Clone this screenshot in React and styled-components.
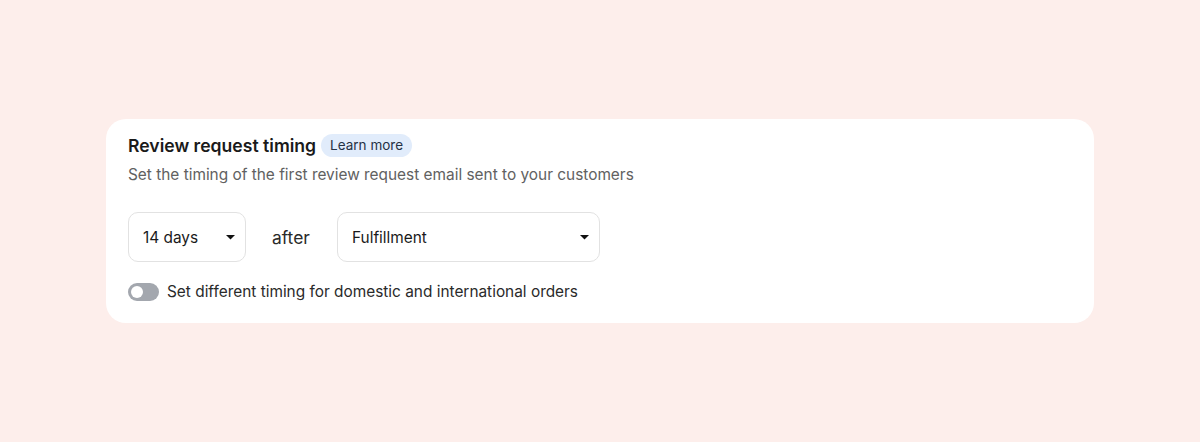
import styled, { createGlobalStyle } from "styled-components";

const GlobalStyle = createGlobalStyle`
  body {
    margin: 0;
    background: #fdeeeb;
    font-family: Inter, "Noto Sans", sans-serif;
    color: #1c1c1c;
  }
`;

const Page = styled.div`
  height: 442px;
  padding: 119px 106px 0;
  box-sizing: border-box;
`;

const Card = styled.section`
  background: #fff;
  border-radius: 20px;
  padding: 13px 22px 22px;
  height: 204px;
  box-sizing: border-box;
`;

const TitleRow = styled.div`
  display: flex;
  align-items: center;
  gap: 5px;
  height: 26px;
`;

const Title = styled.h2`
  margin: 0;
  font-size: 17.6px;
  font-weight: 600;
  color: #1a1a1a;
`;

const Badge = styled.a`
  display: inline-flex;
  align-items: center;
  height: 23px;
  padding: 0 9px;
  border-radius: 12px;
  background: #e1ecfb;
  color: #253246;
  font-size: 13.5px;
  text-decoration: none;
`;

const Subtitle = styled.p`
  margin: 8px 0 0;
  font-size: 15.4px;
  color: #616161;
  line-height: 18px;
`;

const Controls = styled.div`
  display: flex;
  align-items: center;
  margin-top: 28px;
`;

const Select = styled.button`
  display: flex;
  align-items: center;
  justify-content: space-between;
  width: ${(p) => p.$width}px;
  height: 50px;
  padding: 0 10px 0 14px;
  box-sizing: border-box;
  background: #fff;
  border: 1px solid #e2e2e2;
  border-radius: 10px;
  font-family: inherit;
  font-size: 15.4px;
  color: #1a1a1a;
`;

const After = styled.span`
  font-size: 17.4px;
  color: #2a2a2a;
  margin: 0 26px 0 26px;
  width: 39px;
`;

const ToggleRow = styled.label`
  display: flex;
  align-items: center;
  gap: 8px;
  margin-top: 20px;
  font-size: 15.4px;
  color: #2a2a2a;
`;

const Track = styled.span`
  position: relative;
  width: 31px;
  height: 18px;
  border-radius: 9px;
  background: #a3a7ae;
`;

const Knob = styled.span`
  position: absolute;
  left: 3px;
  top: 3px;
  width: 12px;
  height: 12px;
  border-radius: 50%;
  background: #fff;
`;

const Caret = () => (
  <svg width="9" height="5" viewBox="0 0 9 5">
    <path d="M0 0 L9 0 L4.5 4.5 Z" fill="#111" />
  </svg>
);

export default function App() {
  return (
    <Page>
      <GlobalStyle />
      <Card>
        <TitleRow>
          <Title>Review request timing</Title>
          <Badge href="#">Learn more</Badge>
        </TitleRow>
        <Subtitle>
          Set the timing of the first review request email sent to your customers
        </Subtitle>
        <Controls>
          <Select $width={118}>
            14 days <Caret />
          </Select>
          <After>after</After>
          <Select $width={263}>
            Fulfillment <Caret />
          </Select>
        </Controls>
        <ToggleRow>
          <Track>
            <Knob />
          </Track>
          Set different timing for domestic and international orders
        </ToggleRow>
      </Card>
    </Page>
  );
}
